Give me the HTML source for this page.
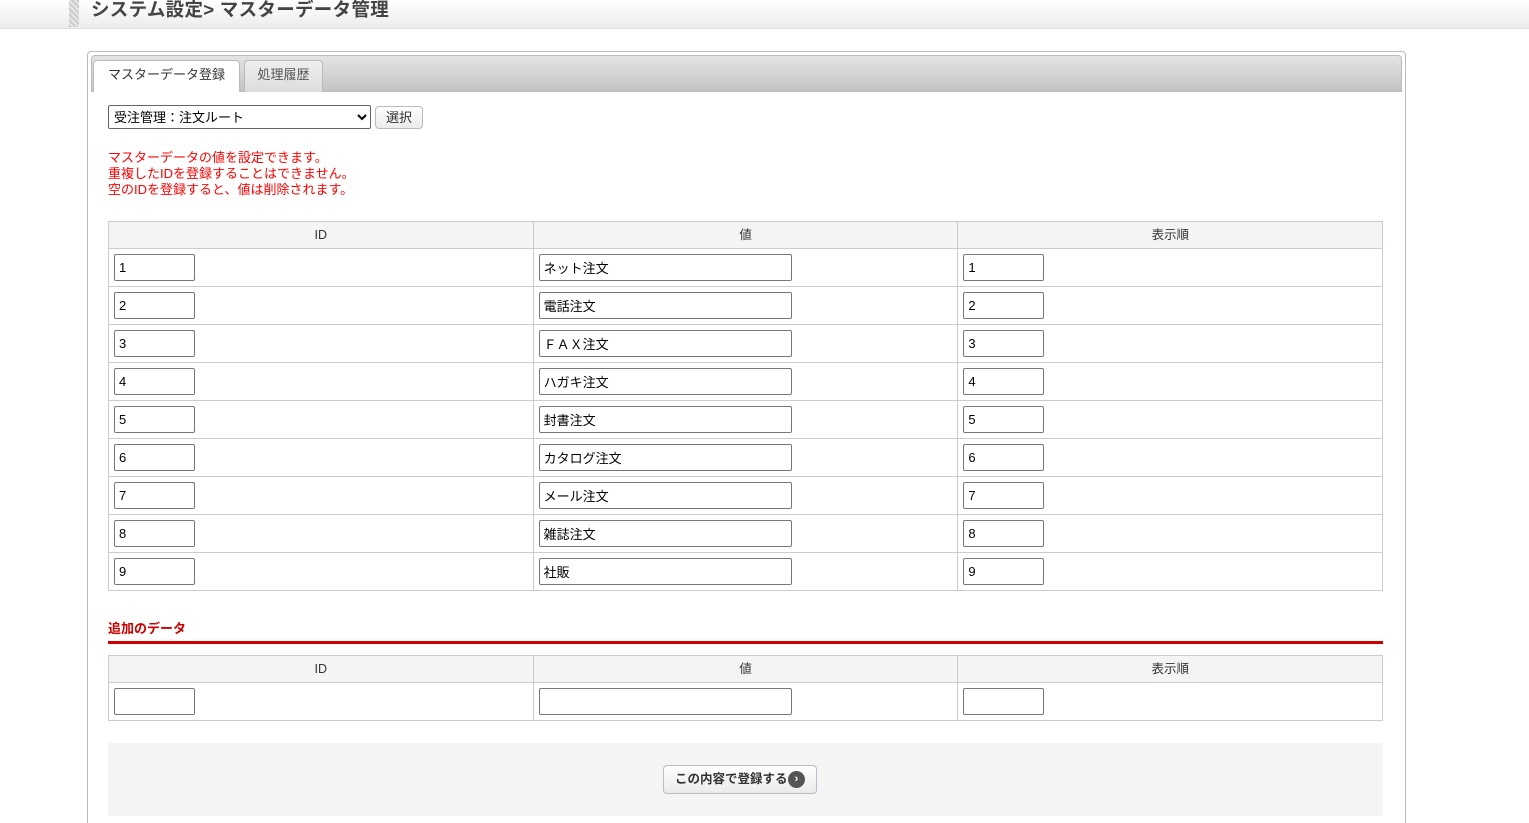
<!DOCTYPE html><html><head><meta charset="utf-8"><style>
*{box-sizing:border-box;margin:0;padding:0}
html,body{width:1529px;height:823px;overflow:hidden}
body{background:#fff;font-family:"Liberation Sans","Noto Sans CJK JP",sans-serif;font-size:12px;color:#333;position:relative}
.a{position:absolute}
.hdr{left:0;top:0;width:1529px;height:29px;background:linear-gradient(#fff,#ececec);border-bottom:1px solid #ddd}
.strip{left:69px;top:0;width:10px;height:27px;background:repeating-linear-gradient(45deg,#ccc 0 2px,#e6e6e6 2px 4px)}
.title{left:91px;top:-1px;font-size:18.5px;font-weight:bold;color:#444;line-height:22px;letter-spacing:0.3px}
.panel{left:87px;top:51px;width:1319px;height:790px;border:1px solid #bbb;border-radius:4px}
.tabbar{left:91px;top:55px;width:1311px;height:37px;background:linear-gradient(#e4e4e4,#c4c4c4);border:1px solid #bbb;border-radius:4px 4px 0 0}
.tab{top:60px;height:32px;border:1px solid #bbb;border-bottom:none;border-radius:4px 4px 0 0;text-align:center;line-height:28px;font-size:13px}
select{position:absolute;left:108px;top:105px;width:263px;height:24px;border:1px solid #666;border-radius:2px;font-size:13px;padding-left:1px;background:#fff;font-family:inherit}
.btn{left:375px;top:106px;width:48px;height:23px;border:1px solid #bbb;border-radius:4px;background:linear-gradient(#fff,#ececec);text-align:center;line-height:21px;font-size:13px}
.msg{left:108px;top:150px;color:#f00;font-size:13px;line-height:16px}
table{position:absolute;left:108px;width:1275px;border-collapse:collapse}
td,th{border:1px solid #ccc;height:38px;padding:0 5px;width:425px}
th{height:27px;background:#f3f4f4;font-weight:normal;font-size:12.5px;line-height:12px}
input{height:27px;border:1px solid #777;border-radius:2px;font-size:13px;padding-left:4px;font-family:inherit;display:block}
.s{width:81px}.w{width:253px}
</style></head><body>
<div class="a hdr"></div><div class="a strip"></div>
<div class="a title">システム設定&gt; マスターデータ管理</div>
<div class="a panel"></div>
<div class="a tabbar"></div>
<div class="a tab" style="left:93px;width:147px;background:#fff">マスターデータ登録</div>
<div class="a tab" style="left:244px;width:79px;background:linear-gradient(#eee,#ddd);color:#555">処理履歴</div>
<select><option>受注管理：注文ルート</option></select>
<div class="a btn">選択</div>
<div class="a msg">マスターデータの値を設定できます。<br>重複したIDを登録することはできません。<br>空のIDを登録すると、値は削除されます。</div>
<table style="top:221px"><tr><th>ID</th><th>値</th><th>表示順</th></tr>
<tr><td><input class="s" value="1"></td><td><input class="w" value="ネット注文"></td><td><input class="s" value="1"></td></tr>
<tr><td><input class="s" value="2"></td><td><input class="w" value="電話注文"></td><td><input class="s" value="2"></td></tr>
<tr><td><input class="s" value="3"></td><td><input class="w" value="ＦＡＸ注文"></td><td><input class="s" value="3"></td></tr>
<tr><td><input class="s" value="4"></td><td><input class="w" value="ハガキ注文"></td><td><input class="s" value="4"></td></tr>
<tr><td><input class="s" value="5"></td><td><input class="w" value="封書注文"></td><td><input class="s" value="5"></td></tr>
<tr><td><input class="s" value="6"></td><td><input class="w" value="カタログ注文"></td><td><input class="s" value="6"></td></tr>
<tr><td><input class="s" value="7"></td><td><input class="w" value="メール注文"></td><td><input class="s" value="7"></td></tr>
<tr><td><input class="s" value="8"></td><td><input class="w" value="雑誌注文"></td><td><input class="s" value="8"></td></tr>
<tr><td><input class="s" value="9"></td><td><input class="w" value="社販"></td><td><input class="s" value="9"></td></tr>
</table>
<div class="a" style="left:108px;top:618px;color:#c00;font-weight:bold;font-size:13px">追加のデータ</div>
<div class="a" style="left:108px;top:641px;width:1275px;height:3px;background:#c00"></div>
<table style="top:655px"><tr><th>ID</th><th>値</th><th>表示順</th></tr>
<tr><td><input class="s"></td><td><input class="w"></td><td><input class="s"></td></tr></table>
<div class="a" style="left:108px;top:743px;width:1275px;height:73px;background:#f4f4f4"></div>
<div class="a" style="left:663px;top:765px;width:154px;height:29px;border:1px solid #bbc;border-radius:4px;background:linear-gradient(#fff,#ebebeb);font-size:12.5px;line-height:26px;padding-left:11px;color:#333;font-weight:bold">この内容で登録する<span style="position:absolute;left:124px;top:5px;width:17px;height:17px;border-radius:50%;background:#555;color:#fff;font-size:11px;line-height:17px;text-align:center">›</span></div>
</body></html>
